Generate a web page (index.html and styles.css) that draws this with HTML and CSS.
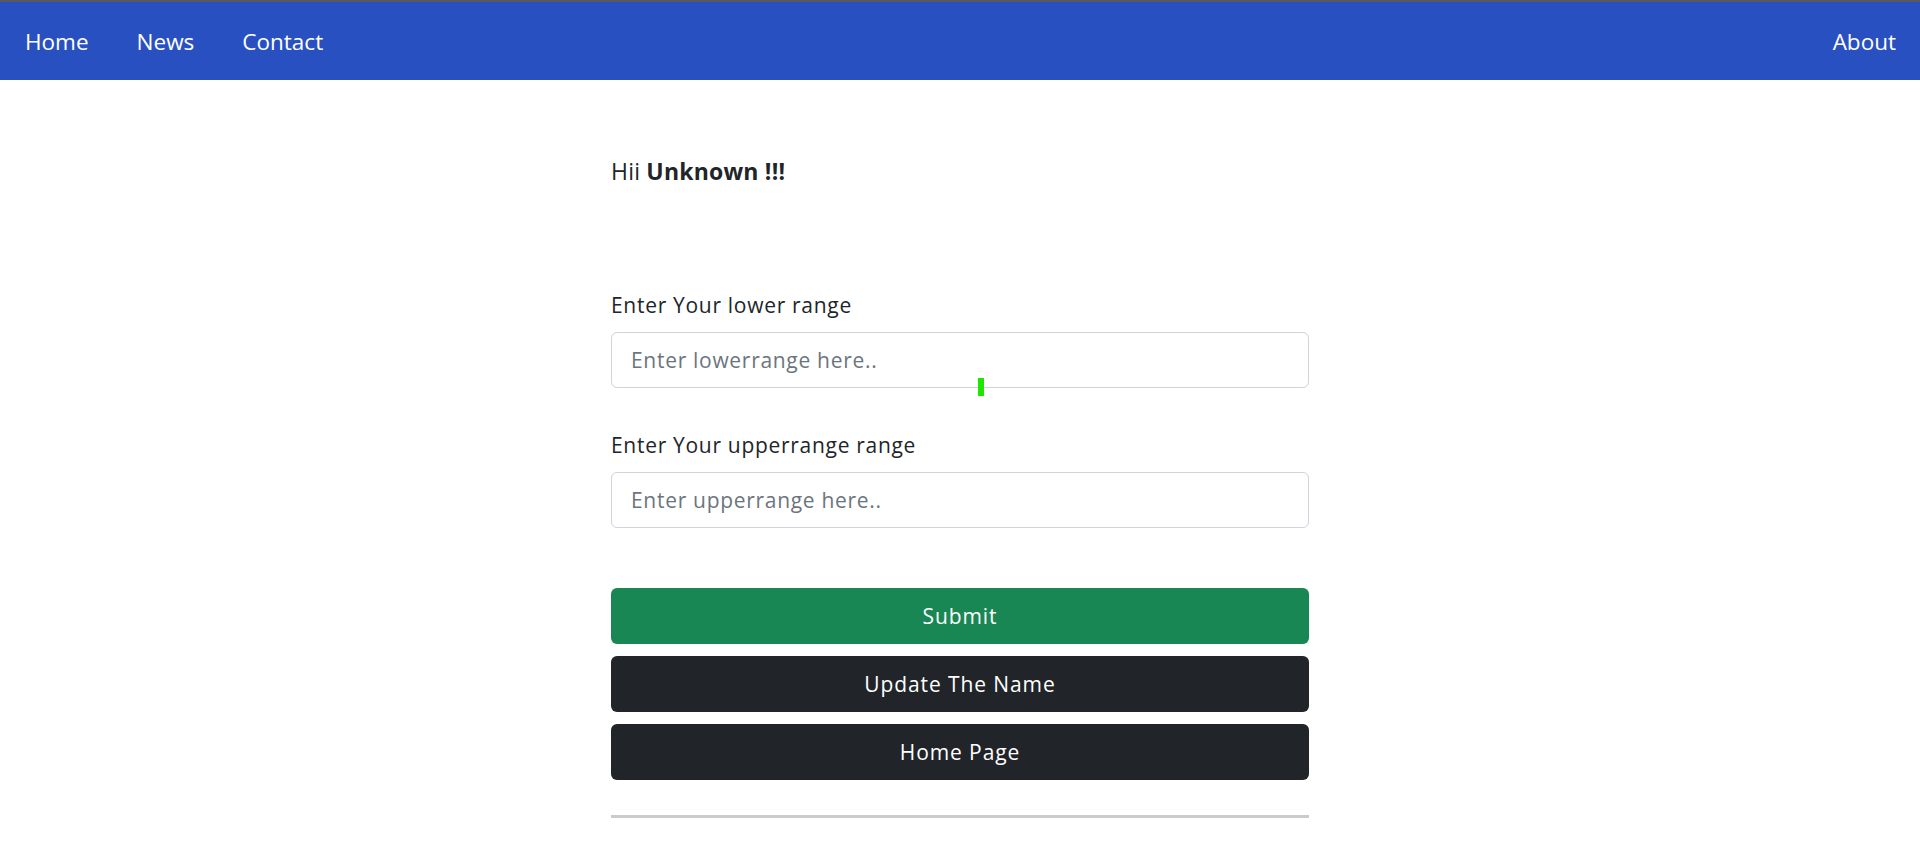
FILE: index.html
```html
<!DOCTYPE html>
<html lang="en">
<head>
<meta charset="utf-8">
<title>Range</title>
<link rel="stylesheet" href="styles.css">
</head>
<body>
<nav class="navbar">
  <div class="nav-left">
    <a class="nav-link" href="#">Home</a>
    <a class="nav-link" href="#">News</a>
    <a class="nav-link" href="#">Contact</a>
  </div>
  <a class="nav-link" href="#">About</a>
</nav>
<main class="container">
  <p class="greeting">Hii <b>Unknown !!!</b></p>
  <form class="range-form">
    <div class="field">
      <label class="label" for="lower">Enter Your lower range</label>
      <div class="input-wrap">
        <input class="form-control" id="lower" type="text" placeholder="Enter lowerrange here..">
        <span class="marker"></span>
      </div>
    </div>
    <div class="field">
      <label class="label" for="upper">Enter Your upperrange range</label>
      <div class="input-wrap">
        <input class="form-control" id="upper" type="text" placeholder="Enter upperrange here..">
      </div>
    </div>
    <div class="buttons">
      <button class="btn btn-success" type="button">Submit</button>
      <button class="btn btn-dark" type="button">Update The Name</button>
      <button class="btn btn-dark" type="button">Home Page</button>
    </div>
  </form>
  <hr class="divider">
</main>
</body>
</html>
```
FILE: styles.css
```css
* { box-sizing: border-box; }
html, body { margin: 0; padding: 0; }
body {
  font-family: "Segoe UI", "Open Sans", "Noto Sans", sans-serif;
  color: #212529;
  background: #fff;
}
.navbar {
  border-top: 2px solid #5a5a5a;
  height: 80px;
  background: #2950c0;
  display: flex;
  align-items: center;
  justify-content: space-between;
  padding: 2px 24px 0 25px;
}
.nav-left { display: flex; gap: 48px; }
.nav-link {
  color: #fff;
  text-decoration: none;
  font-size: 22.5px;
  line-height: 30px;
}
.container {
  width: 698px;
  margin: 0 auto;
}
.greeting {
  margin: 75px 0 0;
  font-size: 23px;
  letter-spacing: 0.2px;
  line-height: 33px;
}
.greeting b { font-weight: 700; }
.range-form { margin-top: 102px; }
.field { margin-bottom: 42px; }
.field + .field { margin-bottom: 0; }
.label {
  display: block;
  font-size: 21px;
  letter-spacing: 0.7px;
  line-height: 30px;
  margin-bottom: 12px;
}
.input-wrap { position: relative; }
.form-control {
  display: block;
  width: 100%;
  height: 56px;
  border: 1px solid #ced4da;
  border-radius: 6px;
  padding: 0 19px;
  font-family: inherit;
  font-size: 21px;
  letter-spacing: 0.7px;
  color: #212529;
  background: #fff;
  outline: none;
}
.form-control::placeholder { color: #6c757d; opacity: 1; }
.marker {
  position: absolute;
  left: 367px;
  top: 46px;
  width: 6px;
  height: 18px;
  background: #1ee600;
}
.buttons {
  margin-top: 60px;
  display: flex;
  flex-direction: column;
  gap: 12px;
}
.btn {
  display: block;
  width: 100%;
  height: 56px;
  border: 0;
  border-radius: 6px;
  color: #fff;
  font-family: inherit;
  font-size: 21px;
  letter-spacing: 0.9px;
  cursor: pointer;
}
.btn-success { background: #198754; }
.btn-dark { background: #212529; }
.divider {
  margin: 35px 0 0;
  border: 0;
  height: 3px;
  background: #cbcbcb;
}
```
